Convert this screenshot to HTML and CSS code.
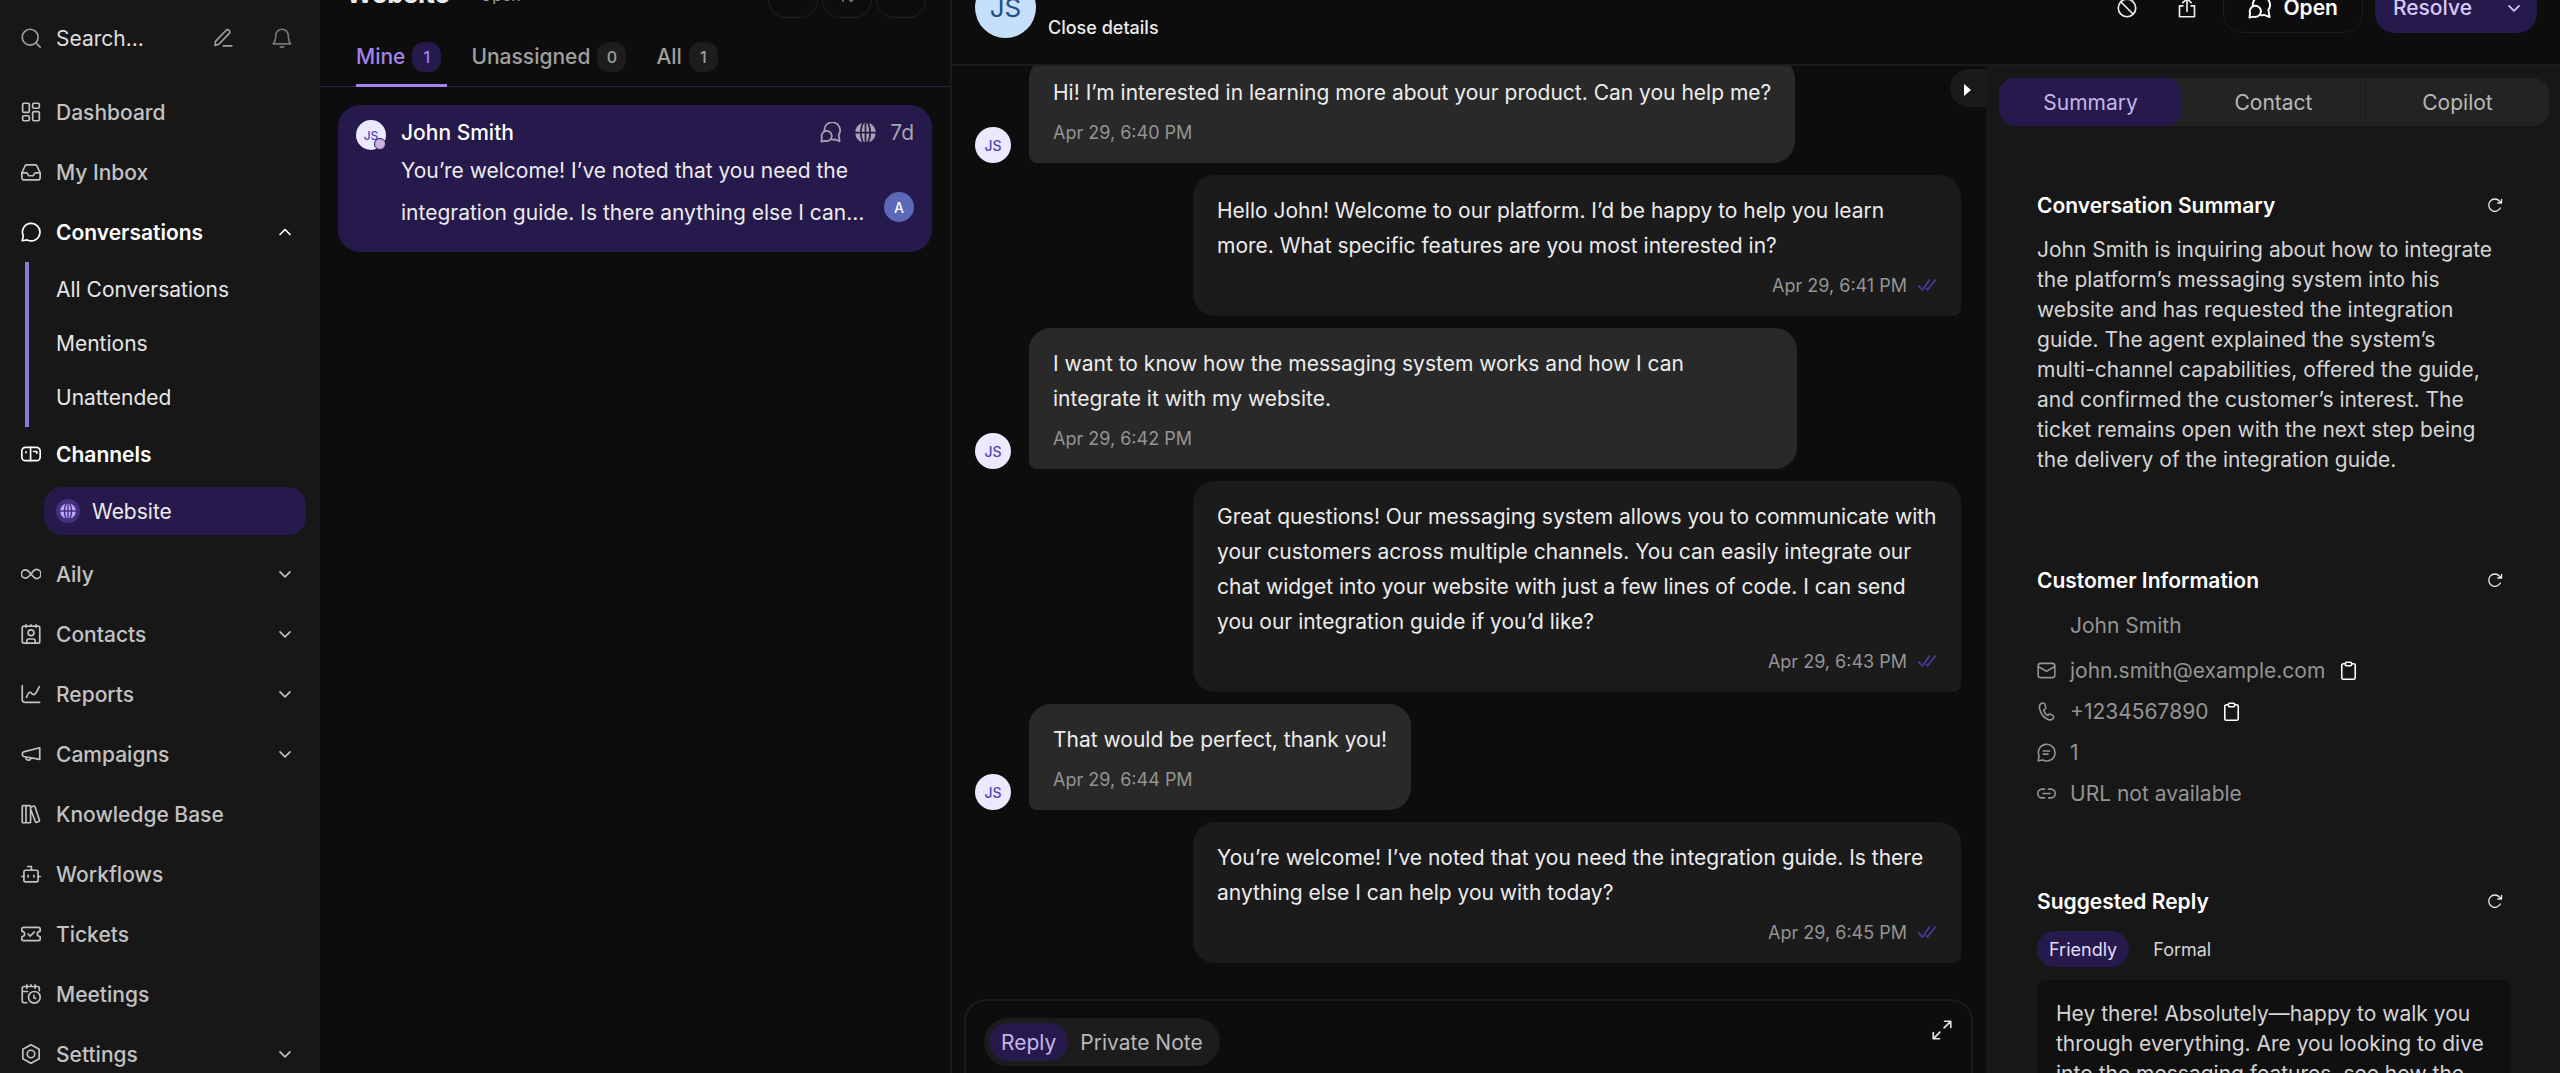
FILE: index.html
```html
<!DOCTYPE html>
<html lang="en">
  <head>
    <meta charset="UTF-8" />
    <meta name="viewport" content="width=device-width, initial-scale=1.0" />
    <title>Website - Conversations</title>
    <link rel="stylesheet" href="styles.css">
  </head>
  <body>
    <!-- Shared icons -->
    <svg class="icon-defs" aria-hidden="true">
      <symbol id="chevron-down" viewBox="0 0 24 24"><path d="M6 9.5l6 6 6-6" /></symbol>
      <symbol id="chevron-up" viewBox="0 0 24 24"><path d="M6 15l6-6 6 6" /></symbol>
      <symbol id="refresh" viewBox="0 0 24 24"><path d="M20 16.5A9.2 9.2 0 1 1 18.6 6L21.5 9M21.8 3.5V9h-5.6" /></symbol>
      <symbol id="checks" viewBox="0 0 24 24"><path d="M2 13l4.5 5L15 6M11 16.5l1.5 1.5L22 6" /></symbol>
      <symbol id="clipboard" viewBox="0 0 24 24"><path d="M8 3.5H5.500a2 2 0 0 0-2 2v15.500a2 2 0 0 0 2 2h13a2 2 0 0 0 2-2V5.500a2 2 0 0 0-2-2H16M9.500 1.500h5a1.500 1.500 0 0 1 1.500 1.500v1.500a1.500 1.500 0 0 1-1.500 1.500h-5A1.500 1.500 0 0 1 8 4.500V3a1.500 1.500 0 0 1 1.500-1.500z" /></symbol>
      <symbol id="chats" viewBox="0 0 24 24"><path d="M5 10.300A9 9 0 1 1 21.300 14.500L22.500 22l-5.500-2.200-3.300.3M1.500 22.500l.7-4.500a5.800 5.800 0 1 1 3.600 3.500z" /></symbol>
      <symbol id="globe" viewBox="0 0 24 24"><path d="M8.200 1A11.700 11.700 0 0 0 .4 11H5.800c.1-3.700.8-7.500 2.400-10zM.4 13a11.700 11.700 0 0 0 7.800 10c-1.600-2.500-2.300-6.300-2.400-10zM15.800 1c1.600 2.500 2.300 6.300 2.400 10h5.400a11.700 11.700 0 0 0-7.800-10zM23.600 13h-5.400c-.1 3.700-.8 7.500-2.400 10a11.700 11.700 0 0 0 7.800-10zM11 .8C9.200 2 7.900 6.500 7.800 11H11zM13 .8V11h3.200C16.100 6.500 14.800 2 13 .8zM7.800 13c.1 4.500 1.400 9 3.200 10.200V13zM13 13v10.200c1.800-1.200 3.100-5.700 3.200-10.200z" /></symbol>
    </svg>

    <div class="app">
      <aside class="sidebar">
        <div class="search-bar">
          <svg class="icon" viewBox="0 0 24 24"><circle cx="11" cy="11" r="9.500" /><path d="M18 18l5 5" /></svg>
          <input class="search-input" type="text" placeholder="Search..." aria-label="Search" />
          <button class="icon-button" aria-label="New conversation">
            <svg class="icon" viewBox="0 0 24 24"><path d="M2.500 21l.5-5L15.500 3a2.500 2.500 0 0 1 4 3.500L7 19.500zM12.500 21.500h10" /></svg>
          </button>
          <button class="icon-button bell" aria-label="Notifications">
            <svg class="icon" viewBox="0 0 24 24"><path d="M1.500 19h21c-3-3-2.500-5.500-3-10a7.500 7.500 0 0 0-15 0c-.5 4.500 0 7-3 10zM10 22.500q2 1.500 4 0" /></svg>
          </button>
        </div>

        <nav class="menu">
          <a class="menu-item" href="#">
            <svg class="icon" viewBox="0 0 24 24"><rect x="2" y="1.500" width="8" height="11" rx="1.500" /><rect x="14" y="1.500" width="8" height="6" rx="1.500" /><rect x="14" y="11.500" width="8" height="11" rx="1.500" /><rect x="2" y="16.500" width="8" height="6" rx="1.500" /></svg>
            <span>Dashboard</span>
          </a>
          <a class="menu-item" href="#">
            <svg class="icon" viewBox="0 0 24 24"><path d="M1 13l4-8.500A2 2 0 0 1 6.800 3.500h10.400A2 2 0 0 1 19 4.500L23 13v6a2.500 2.500 0 0 1-2.500 2.500h-17A2.500 2.500 0 0 1 1 19zM1 13h6l2.500 3.500h5L17 13h6" /></svg>
            <span>My Inbox</span>
          </a>
          <a class="menu-item active" href="#">
            <svg class="icon" viewBox="0 0 24 24"><path d="M1.500 22.500l1.200-6A10.500 10.500 0 1 1 7.500 21.500z" /></svg>
            <span>Conversations</span>
            <svg class="icon chevron"><use href="#chevron-up" /></svg>
          </a>
          <div class="submenu">
            <a href="#">All Conversations</a>
            <a href="#">Mentions</a>
            <a href="#">Unattended</a>
          </div>
          <a class="menu-item active channels" href="#">
            <svg class="icon" viewBox="0 0 24 24"><rect x="1" y="4" width="22" height="16" rx="4.500" /><path d="M11.500 4v16M15 9h4v2M6 9.500v1" /></svg>
            <span>Channels</span>
          </a>
          <a class="channel" href="#">
            <span class="channel-icon"><svg class="icon solid"><use href="#globe" /></svg></span>
            <span>Website</span>
          </a>
          <a class="menu-item" href="#">
            <svg class="icon" viewBox="0 0 24 24"><path d="M12 12c-2-2.500-4-5-6.500-5a5 5 0 0 0 0 10c2.500 0 4.500-2.500 6.500-5s4-5.500 6.500-5.500a5.500 5.500 0 0 1 0 11c-2.500 0-4.500-3-6.500-5.500z" /></svg>
            <span>Aily</span>
            <svg class="icon chevron"><use href="#chevron-down" /></svg>
          </a>
          <a class="menu-item" href="#">
            <svg class="icon" viewBox="0 0 24 24"><rect x="1.500" y="2.500" width="21" height="20.500" rx="2" /><circle cx="12" cy="10.500" r="3.500" /><path d="M6 1v3M12 1v1M18 1v3M7 22.500v-2.500q0-2 2-2h6q2 0 2 2v2.500" /></svg>
            <span>Contacts</span>
            <svg class="icon chevron"><use href="#chevron-down" /></svg>
          </a>
          <a class="menu-item" href="#">
            <svg class="icon" viewBox="0 0 24 24"><path d="M1.500 2v17q0 3 3 3h18M6.500 16c1.500-4 2.500-6.500 4.500-6s2.500 3.500 5 2.500S20 7 22 3" /></svg>
            <span>Reports</span>
            <svg class="icon chevron"><use href="#chevron-down" /></svg>
          </a>
          <a class="menu-item" href="#">
            <svg class="icon" viewBox="0 0 24 24"><path d="M22.500 4.500v14L3 15q-1.500-1-1.500-3T3 9.500zM5.500 15.500c.5 3 1.500 4 3.500 4s2.500-1 3-3" /></svg>
            <span>Campaigns</span>
            <svg class="icon chevron"><use href="#chevron-down" /></svg>
          </a>
          <a class="menu-item" href="#">
            <svg class="icon" viewBox="0 0 24 24"><path d="M1.500 3a1 1 0 0 1 1-1H6v20.500H2.500a1 1 0 0 1-1-1zM6 2h4.500a1 1 0 0 1 1 1v18.500a1 1 0 0 1-1 1H6M11.500 4l4-1.500a1 1 0 0 1 1.300.7l5.400 16.500a1 1 0 0 1-.7 1.200L18.500 22a1 1 0 0 1-1.200-.7L11.500 6" /></svg>
            <span>Knowledge Base</span>
          </a>
          <a class="menu-item" href="#">
            <svg class="icon" viewBox="0 0 24 24"><rect x="3.500" y="7.500" width="17" height="14" rx="2" /><path d="M8 3h4.500v4.500M3.500 15H1M20.500 15H23M8.500 13.500v2M15.500 13.500v2" /></svg>
            <span>Workflows</span>
          </a>
          <a class="menu-item" href="#">
            <svg class="icon" viewBox="0 0 24 24"><path d="M1 6a2 2 0 0 1 2-2h18a2 2 0 0 1 2 2v2.500q-3.500 1-3.500 3.500T23 15.500V18a2 2 0 0 1-2 2H3a2 2 0 0 1-2-2v-2.500Q4.500 14.500 4.500 12T1 8.500zM8.500 12l2.500 2.500 5-5" /></svg>
            <span>Tickets</span>
          </a>
          <a class="menu-item" href="#">
            <svg class="icon" viewBox="0 0 24 24"><path d="M22 8V5a2 2 0 0 0-2-2H3.500a2 2 0 0 0-2 2v15.500a2 2 0 0 0 2 2H7M7 1v4M12 1v2M17 1v4M1.500 9H8" /><circle cx="16" cy="16" r="7" /><path d="M15.500 13.500v3l2 1" /></svg>
            <span>Meetings</span>
          </a>
          <a class="menu-item" href="#">
            <svg class="icon" viewBox="0 0 24 24"><path d="M12 .8l9.800 5.600v11.200L12 23.200l-9.800-5.600V6.400z" /><circle cx="12" cy="12" r="4.500" /></svg>
            <span>Settings</span>
            <svg class="icon chevron"><use href="#chevron-down" /></svg>
          </a>
        </nav>
      </aside>

      <section class="list-panel">
        <header class="list-header">
          <h1>Website</h1>
          <span class="list-status">Open</span>
          <div class="list-actions">
            <button aria-label="Filter"></button>
            <button aria-label="Sort">
              <svg class="icon" viewBox="0 0 24 24"><path d="M7 22V3M3 7l4-4 4 4M17 3v19M13 18l4 4 4-4" /></svg>
            </button>
            <button aria-label="Expand list"></button>
          </div>
        </header>
        <div class="tabs">
          <button class="tab selected">Mine <span class="count">1</span></button>
          <button class="tab">Unassigned <span class="count">0</span></button>
          <button class="tab">All <span class="count">1</span></button>
        </div>
        <article class="conversation">
          <div class="avatar small">JS<span class="presence"></span></div>
          <div class="conversation-body">
            <div class="conversation-top">
              <h2>John Smith</h2>
              <svg class="icon"><use href="#chats" /></svg>
              <svg class="icon solid"><use href="#globe" /></svg>
              <span>7d</span>
            </div>
            <div class="conversation-preview">
              <p>You’re welcome! I’ve noted that you need the integration guide. Is there anything else I can help you with today?</p>
              <div class="avatar small agent">A</div>
            </div>
          </div>
        </article>
      </section>

      <main class="main">
        <header class="chat-header">
          <div class="avatar large">JS</div>
          <button class="close-details">Close details</button>
          <div class="chat-actions">
            <button class="icon-button" aria-label="Block contact">
              <svg class="icon" viewBox="0 0 24 24"><circle cx="12" cy="12" r="10.500" /><path d="M4.500 4.500l15 15" /></svg>
            </button>
            <button class="icon-button" aria-label="Share">
              <svg class="icon" viewBox="0 0 24 24"><path d="M7 9.500H3v13h18v-13h-4M12 16V1M7 5.500L12 1l5 4.500" /></svg>
            </button>
            <button class="status-button">
              <svg class="icon"><use href="#chats" /></svg>
              Open
            </button>
            <button class="resolve-button">
              Resolve
              <svg class="icon chevron"><use href="#chevron-down" /></svg>
            </button>
          </div>
        </header>

        <div class="workspace">
          <section class="chat">
            <div class="thread">
              <div class="message incoming">
                <div class="avatar">JS</div>
                <div class="bubble">
                  <p>Hi! I’m interested in learning more about your product. Can you help me?</p>
                  <time>Apr 29, 6:40 PM</time>
                </div>
              </div>
              <div class="message outgoing">
                <div class="bubble">
                  <p>Hello John! Welcome to our platform. I’d be happy to help you learn more. What specific features are you most interested in?</p>
                  <time>Apr 29, 6:41 PM <svg class="icon"><use href="#checks" /></svg></time>
                </div>
              </div>
              <div class="message incoming">
                <div class="avatar">JS</div>
                <div class="bubble">
                  <p>I want to know how the messaging system works and how I can integrate it with my website.</p>
                  <time>Apr 29, 6:42 PM</time>
                </div>
              </div>
              <div class="message outgoing">
                <div class="bubble">
                  <p>Great questions! Our messaging system allows you to communicate with your customers across multiple channels. You can easily integrate our chat widget into your website with just a few lines of code. I can send you our integration guide if you’d like?</p>
                  <time>Apr 29, 6:43 PM <svg class="icon"><use href="#checks" /></svg></time>
                </div>
              </div>
              <div class="message incoming">
                <div class="avatar">JS</div>
                <div class="bubble">
                  <p>That would be perfect, thank you!</p>
                  <time>Apr 29, 6:44 PM</time>
                </div>
              </div>
              <div class="message outgoing">
                <div class="bubble">
                  <p>You’re welcome! I’ve noted that you need the integration guide. Is there anything else I can help you with today?</p>
                  <time>Apr 29, 6:45 PM <svg class="icon"><use href="#checks" /></svg></time>
                </div>
              </div>
            </div>
            <div class="composer">
              <div class="composer-modes">
                <button class="selected">Reply</button>
                <button>Private Note</button>
              </div>
              <button class="icon-button expand" aria-label="Expand editor">
                <svg class="icon" viewBox="0 0 24 24"><path d="M15 1.500h7.500V9M22 2l-7.500 7.500M9 22.500H1.500V15M2 22l7.500-7.500" /></svg>
              </button>
            </div>
            <button class="collapse" aria-label="Hide details">
              <svg viewBox="0 0 8 12"><path d="M0 0l7 6-7 6z" /></svg>
            </button>
          </section>

          <aside class="details">
            <div class="detail-tabs">
              <button class="selected">Summary</button>
              <button>Contact</button>
              <button>Copilot</button>
            </div>

            <section class="block">
              <div class="block-title">
                <h3>Conversation Summary</h3>
                <button class="icon-button" aria-label="Refresh summary"><svg class="icon"><use href="#refresh" /></svg></button>
              </div>
              <p class="summary">John Smith is inquiring about how to integrate the platform’s messaging system into his website and has requested the integration guide. The agent explained the system’s multi-channel capabilities, offered the guide, and confirmed the customer’s interest. The ticket remains open with the next step being the delivery of the integration guide.</p>
            </section>

            <section class="block">
              <div class="block-title">
                <h3>Customer Information</h3>
                <button class="icon-button" aria-label="Refresh customer"><svg class="icon"><use href="#refresh" /></svg></button>
              </div>
              <ul class="info">
                <li class="info-name">John Smith</li>
                <li>
                  <svg class="icon" viewBox="0 0 24 24"><rect x="1.500" y="3" width="21" height="18" rx="3" /><path d="M1.500 7l10.500 6 10.500-6" /></svg>
                  <span>john.smith@example.com</span>
                  <button class="icon-button" aria-label="Copy email"><svg class="icon"><use href="#clipboard" /></svg></button>
                </li>
                <li>
                  <svg class="icon" viewBox="0 0 24 24"><path d="M6 1.500c-2.500 1-3.500 4-2.500 8 2 6.500 6 11 11 12.800 3 .8 5.500-.3 6.500-2.800.3-1-.2-1.800-1-2.300l-3-1.700c-1-.5-2-.2-2.500.7l-.7 1c-3-1.500-4.800-4.500-5.300-7.500l1.500-.7c1-.5 1.300-1.500 1-2.500L10 2.800C9.500 1.500 7.500.9 6 1.500z" /></svg>
                  <span>+1234567890</span>
                  <button class="icon-button" aria-label="Copy phone"><svg class="icon"><use href="#clipboard" /></svg></button>
                </li>
                <li>
                  <svg class="icon" viewBox="0 0 24 24"><path d="M1.500 22.500l1.200-6A10.500 10.500 0 1 1 7.500 21.500zM8 10h8M8 14h6" /></svg>
                  <span>1</span>
                </li>
                <li>
                  <svg class="icon" viewBox="0 0 24 24"><path d="M9.500 6.500H6.500a5.500 5.500 0 0 0 0 11h3M14.500 6.500h3a5.500 5.500 0 0 1 0 11h-3M7.500 12h9" /></svg>
                  <span>URL not available</span>
                </li>
              </ul>
            </section>

            <section class="block">
              <div class="block-title">
                <h3>Suggested Reply</h3>
                <button class="icon-button" aria-label="Refresh reply"><svg class="icon"><use href="#refresh" /></svg></button>
              </div>
              <div class="tones">
                <button class="selected">Friendly</button>
                <button>Formal</button>
              </div>
              <p class="suggestion">Hey there! Absolutely—happy to walk you through everything. Are you looking to dive into the messaging features, see how the</p>
            </section>
          </aside>
        </div>
      </main>
    </div>
  </body>
</html>
```
FILE: styles.css
```css
* {
  box-sizing: border-box;
}

body {
  margin: 0;
  background-color: #0d0d0d;
  color: #ececec;
  font-family: Inter, "Liberation Sans", sans-serif;
  font-size: 21px;
}

h1,
h2,
h3,
p,
ul {
  margin: 0;
  padding: 0;
}

a {
  color: inherit;
  text-decoration: none;
}

button {
  padding: 0;
  border: 0;
  background: none;
  color: inherit;
  font: inherit;
  cursor: pointer;
}

.icon-defs {
  display: none;
}

.icon {
  width: 20px;
  height: 20px;
  flex-shrink: 0;
  fill: none;
  stroke: currentColor;
  stroke-width: 2;
  stroke-linecap: round;
  stroke-linejoin: round;
}

.icon.solid {
  fill: currentColor;
  stroke: none;
}

.icon-button {
  display: flex;
}

.app {
  display: flex;
  height: 100vh;
  overflow: hidden;
}

/* Sidebar */
.sidebar {
  width: 320px;
  flex-shrink: 0;
  overflow: hidden;
  background-color: #171717;
}

.search-bar {
  display: flex;
  align-items: center;
  height: 76px;
  margin-bottom: 6px;
  padding: 0 28px 0 21px;
  color: #a0a0a0;
}

.search-input {
  flex: 1;
  min-width: 0;
  margin-left: 15px;
  padding: 0;
  border: 0;
  outline: 0;
  background: none;
  color: #ececec;
  font: inherit;
}

.search-input::placeholder {
  color: #dedede;
}

.bell {
  margin-left: 39px;
  color: #777;
}

.menu-item {
  display: flex;
  align-items: center;
  gap: 15px;
  height: 60px;
  padding: 0 25px 0 21px;
  color: #c2c2c2;
  font-weight: 500;
}

.menu-item.active {
  color: #fff;
  font-weight: 600;
}

.menu .chevron {
  margin-left: auto;
}

.submenu {
  margin-left: 25px;
  padding-bottom: 3px;
  border-left: 4px solid #8f78dd;
}

.submenu a {
  display: flex;
  align-items: center;
  height: 54px;
  padding-left: 27px;
  color: #e6e6e6;
}

.menu-item.channels {
  height: 54px;
}

.channel {
  display: flex;
  align-items: center;
  gap: 12px;
  height: 48px;
  margin: 6px 14px 9px 44px;
  padding-left: 12px;
  border-radius: 18px;
  background-color: #26194b;
}

.channel-icon {
  display: flex;
  align-items: center;
  justify-content: center;
  width: 24px;
  height: 24px;
  border-radius: 50%;
  background-color: #44307c;
  color: #bda6ff;
}

.channel-icon .icon {
  width: 16px;
  height: 16px;
}

/* Conversation list */
.list-panel {
  width: 632px;
  flex-shrink: 0;
  border-right: 2px solid #1a1a1a;
}

.list-header {
  display: flex;
  align-items: flex-end;
  height: 20px;
  padding: 0 24px 0 26px;
  overflow: hidden;
}

.list-header h1 {
  margin-bottom: 10px;
  font-size: 26px;
  line-height: 32px;
}

.list-status {
  margin: 0 0 15px 30px;
  color: #a0a0a0;
  font-size: 16px;
  line-height: 20px;
}

.list-actions {
  display: flex;
  gap: 4px;
  margin-left: auto;
}

.list-actions button {
  display: flex;
  align-items: center;
  justify-content: center;
  width: 50px;
  height: 50px;
  margin-bottom: 2px;
  border: 1px solid #222;
  border-radius: 18px;
  color: #777;
}

.tabs {
  display: flex;
  gap: 24px;
  height: 67px;
  padding: 0 36px;
  border-bottom: 1px solid #2c2542;
}

.tab {
  display: flex;
  align-items: center;
  gap: 7px;
  height: 67px;
  padding: 9px 6px 0 0;
  border-bottom: 3px solid transparent;
  color: #a0a0a0;
  font-weight: 500;
}

.count {
  min-width: 29px;
  border-radius: 12px;
  background-color: #1d1d1d;
  font-size: 16px;
  line-height: 30px;
  text-align: center;
}

.tab.selected {
  border-color: #a284ec;
  color: #a284ec;
}

.tab.selected .count {
  background-color: #26194b;
}

.conversation {
  display: flex;
  gap: 15px;
  margin: 18px 18px 0;
  padding: 12px 18px 18px;
  border-radius: 22px;
  background-color: #26194b;
}

.conversation-body {
  flex: 1;
  min-width: 0;
}

.conversation-top {
  display: flex;
  align-items: center;
  gap: 14px;
  height: 30px;
  margin-bottom: 3px;
  color: #a9a4b4;
}

.conversation-top h2 {
  margin-right: auto;
  color: #fff;
  font-size: 21px;
  font-weight: 500;
}

.conversation-top .icon {
  width: 21px;
  height: 21px;
}

.conversation-preview {
  display: flex;
  align-items: flex-end;
  gap: 16px;
}

.conversation-preview p {
  flex: 1;
  display: -webkit-box;
  overflow: hidden;
  -webkit-box-orient: vertical;
  -webkit-line-clamp: 2;
  line-height: 42px;
}

.avatar {
  display: flex;
  align-items: center;
  justify-content: center;
  flex-shrink: 0;
  width: 36px;
  height: 36px;
  border-radius: 50%;
  background-color: #ece8fd;
  color: #5543b8;
  font-size: 14px;
  font-weight: 500;
}

.avatar.small {
  position: relative;
  width: 30px;
  height: 30px;
  margin-top: 3px;
  font-size: 12px;
}

.avatar.agent {
  margin-bottom: 12px;
  background-color: #5c68b8;
  color: #fff;
  font-size: 14px;
}

.avatar.large {
  width: 61px;
  height: 61px;
  background-color: #c6dffa;
  color: #234f86;
  font-size: 26px;
  font-weight: 400;
}

.presence {
  position: absolute;
  right: 0;
  bottom: 0;
  width: 12px;
  height: 12px;
  border: 1px solid #26194b;
  border-radius: 50%;
  background-color: #cbb0e8;
}

/* Chat header */
.main {
  flex: 1;
  display: flex;
  flex-direction: column;
  min-width: 0;
}

.chat-header {
  display: flex;
  align-items: flex-end;
  height: 66px;
  padding: 0 23px 26px;
  border-bottom: 2px solid #1b1b1b;
}

.close-details {
  margin: 0 auto 0 12px;
  font-size: 18px;
  font-weight: 500;
  line-height: 20px;
}

.chat-actions {
  display: flex;
  align-items: center;
  height: 61px;
}

.chat-actions .icon-button {
  margin-right: 40px;
}

.status-button,
.resolve-button {
  display: flex;
  align-items: center;
  height: 50px;
  border-radius: 20px;
  font-weight: 500;
}

.status-button {
  gap: 12px;
  margin: 0 12px 0 -14px;
  padding: 0 24px;
  border: 1px solid #1e1e1e;
  color: #fff;
  font-weight: 600;
}

.status-button .icon {
  width: 23px;
  height: 23px;
}

.resolve-button {
  gap: 32px;
  padding: 0 13px 0 18px;
  background-color: #26194b;
  color: #d6c8f8;
}

.workspace {
  flex: 1;
  display: flex;
  min-height: 0;
}

/* Messages */
.chat {
  position: relative;
  flex: 1;
  display: flex;
  flex-direction: column;
  min-width: 0;
}

.thread {
  flex: 1;
  display: flex;
  flex-direction: column;
  justify-content: flex-end;
  gap: 12px;
  min-height: 0;
  padding: 0 25px 36px 23px;
  overflow: hidden;
}

.message {
  display: flex;
  align-items: flex-end;
  gap: 18px;
}

.message.outgoing {
  justify-content: flex-end;
}

.bubble {
  max-width: 768px;
  padding: 18px 24px 15px;
  border-radius: 22px 22px 22px 8px;
  background-color: #292929;
}

.bubble p {
  line-height: 35px;
}

.bubble time {
  display: flex;
  align-items: center;
  gap: 10px;
  height: 38px;
  padding-top: 6px;
  color: #949494;
  font-size: 18px;
}

.outgoing .bubble {
  border-radius: 22px 22px 8px 22px;
  background-color: #1b1b1b;
}

.outgoing time {
  justify-content: flex-end;
}

.bubble .icon {
  color: #4b3a9e;
}

.composer {
  display: flex;
  align-items: flex-start;
  justify-content: space-between;
  height: 74px;
  margin: 0 13px 0 12px;
  padding: 17px 19px 0 18px;
  border: 2px solid #1b1b1b;
  border-bottom: 0;
  border-radius: 22px 22px 0 0;
}

.composer-modes {
  display: flex;
  padding: 5px;
  border-radius: 24px;
  background-color: #1c1c1c;
  color: #b8b8b8;
}

.composer-modes button {
  height: 38px;
  padding: 0 12px;
  border-radius: 19px;
}

.composer-modes .selected {
  background-color: #26194b;
  color: #c4b5ea;
}

.expand {
  margin-top: 2px;
  color: #e6e6e6;
}

.collapse {
  position: absolute;
  top: 3px;
  right: 0;
  width: 36px;
  height: 38px;
  border-radius: 19px 0 0 19px;
  background-color: #1a1a1a;
}

.collapse svg {
  width: 8px;
  height: 12px;
  fill: #fff;
}

/* Details panel */
.details {
  width: 574px;
  flex-shrink: 0;
  overflow: hidden;
  padding: 12px 11px 0 13px;
  background-color: #171717;
}

.detail-tabs {
  display: flex;
  margin-bottom: 64px;
  border-radius: 16px;
  background-color: #232323;
  color: #b8b8b8;
}

.detail-tabs button {
  flex: 1;
  height: 48px;
}

.detail-tabs button + button + button {
  border-left: 1px solid #1c1c1c;
}

.detail-tabs .selected {
  border-radius: 16px;
  background-color: #26194b;
  color: #c4b5ea;
}

.block {
  margin-bottom: 72px;
  padding: 0 38px;
}

.block-title {
  display: flex;
  align-items: center;
  justify-content: space-between;
  height: 30px;
  margin-bottom: 15px;
  padding-right: 8px;
}

.block-title h3 {
  color: #fff;
  font-size: 21px;
  font-weight: 600;
}

.block-title .icon {
  width: 16px;
  height: 16px;
}

.summary {
  padding: 0 16px 18px 0;
  line-height: 30px;
  color: #d4d4d4;
}

.info {
  list-style-type: none;
  color: #949494;
}

.info li {
  display: flex;
  align-items: center;
  gap: 14px;
  height: 41px;
}

.info .icon {
  width: 19px;
  height: 19px;
}

.info .icon-button {
  color: #fff;
}

.info .info-name {
  height: 30px;
  margin-bottom: 10px;
  padding-left: 33px;
}

.tones {
  display: flex;
  gap: 12px;
  margin-bottom: 13px;
}

.tones button {
  height: 36px;
  padding: 0 12px;
  border-radius: 18px;
  color: #d4d4d4;
  font-size: 18px;
}

.tones .selected {
  background-color: #26194b;
  color: #e4dcfa;
}

.suggestion {
  padding: 19px 16px 19px 19px;
  border-radius: 10px;
  background-color: #101010;
  line-height: 30px;
  color: #d4d4d4;
}
```
